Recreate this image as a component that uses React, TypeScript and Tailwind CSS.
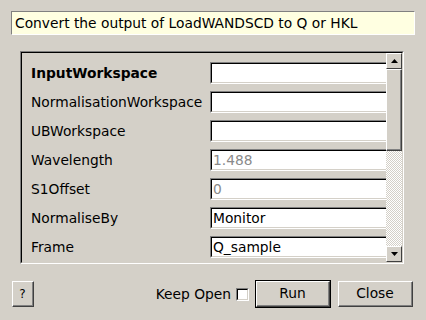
import React from 'react';

interface Row {
  label: string;
  value: string;
  bold?: boolean;
  disabled?: boolean;
}

const rows: Row[] = [
  { label: 'InputWorkspace', value: '', bold: true },
  { label: 'NormalisationWorkspace', value: '' },
  { label: 'UBWorkspace', value: '' },
  { label: 'Wavelength', value: '1.488', disabled: true },
  { label: 'S1Offset', value: '0', disabled: true },
  { label: 'NormaliseBy', value: 'Monitor' },
  { label: 'Frame', value: 'Q_sample' },
];

function Field({ value, disabled }: { value: string; disabled?: boolean }) {
  return (
    <div className="w-[200px] shrink-0 h-[22px] border-t border-l border-[#808080] border-b border-r border-b-white border-r-white">
      <div className="h-full border-t border-l border-black border-b border-r border-b-[#d4d0c8] border-r-[#d4d0c8] bg-white flex items-center pl-[1px]">
        <span className={disabled ? 'text-[#8a8a8a]' : 'text-black'}>{value}</span>
      </div>
    </div>
  );
}

function RaisedButton({ children, width, isDefault }: { children: React.ReactNode; width: string; isDefault?: boolean }) {
  const inner = (
    <div className="h-full border-t border-l border-white border-b border-r border-b-[#404040] border-r-[#404040]">
      <div className="h-full border-b border-r border-b-[#808080] border-r-[#808080] flex items-center justify-center">
        {children}
      </div>
    </div>
  );
  if (isDefault) {
    return <div className={`${width} h-[28px] border border-black`}>{inner}</div>;
  }
  return <div className={`${width} h-[26px]`}>{inner}</div>;
}

export default function App() {
  return (
    <div
      className="w-[426px] h-[320px] bg-[#d4d0c8] text-[13.8px] text-black flex flex-col overflow-hidden"
      style={{ fontFamily: '"DejaVu Sans", sans-serif' }}
    >
      <div className="mt-[11px] ml-[11px] w-[404px] h-[24px] bg-[#ffffe1] border-t border-l border-[#808080] border-b border-r border-b-white border-r-white flex items-center pl-[3px]">
        Convert the output of LoadWANDSCD to Q or HKL
      </div>

      <div className="mt-[16px] ml-[20px] w-[384px] h-[213px] border-t border-l border-[#808080] border-b border-r border-b-white border-r-white">
        <div className="h-full flex border-t border-l border-black border-b border-r border-b-[#d4d0c8] border-r-[#d4d0c8]">
          <div className="flex-1 overflow-hidden pt-[9px] pl-[9px] flex flex-col gap-[7px]">
            {rows.map((r) => (
              <div key={r.label} className="flex items-center h-[22px] shrink-0">
                <span className={`w-[179px] shrink-0 whitespace-nowrap ${r.bold ? 'font-bold' : ''}`}>{r.label}</span>
                <Field value={r.value} disabled={r.disabled} />
              </div>
            ))}
          </div>
          <div className="w-[16px] flex flex-col">
            <div className="h-[16px] border-t border-l border-white border-b border-r border-b-[#404040] border-r-[#404040] bg-[#d4d0c8] flex items-center justify-center">
              <svg width="7" height="4" viewBox="0 0 7 4"><path d="M3.5 0 L7 4 L0 4 Z" fill="#000" /></svg>
            </div>
            <div className="h-[82px] border-t border-l border-white border-b border-r border-b-[#404040] border-r-[#404040] bg-[#d4d0c8]">
              <div className="h-full border-b border-r border-b-[#808080] border-r-[#808080]" />
            </div>
            <div className="flex-1 bg-[repeating-conic-gradient(#d4d0c8_0_25%,#ffffff_0_50%)] bg-[length:2px_2px]" />
            <div className="h-[16px] border-t border-l border-white border-b border-r border-b-[#404040] border-r-[#404040] bg-[#d4d0c8] flex items-center justify-center">
              <svg width="7" height="4" viewBox="0 0 7 4"><path d="M0 0 L7 0 L3.5 4 Z" fill="#000" /></svg>
            </div>
          </div>
        </div>
      </div>

      <div className="mt-[16px] h-[28px] flex items-center pl-[12px] pr-[13px]">
        <RaisedButton width="w-[22px]">
          <span className="text-[12px]">?</span>
        </RaisedButton>
        <div className="flex-1" />
        <span>Keep Open</span>
        <div className="ml-[5px] w-[13px] h-[13px] bg-white border-t border-l border-[#808080] border-b border-r border-b-white border-r-white">
          <div className="h-full border-t border-l border-black border-b border-r border-b-[#d4d0c8] border-r-[#d4d0c8]" />
        </div>
        <div className="ml-[6px]">
          <RaisedButton width="w-[76px]" isDefault>
            <span>Run</span>
          </RaisedButton>
        </div>
        <div className="ml-[7px]">
          <RaisedButton width="w-[75px]">
            <span>Close</span>
          </RaisedButton>
        </div>
      </div>
    </div>
  );
}
